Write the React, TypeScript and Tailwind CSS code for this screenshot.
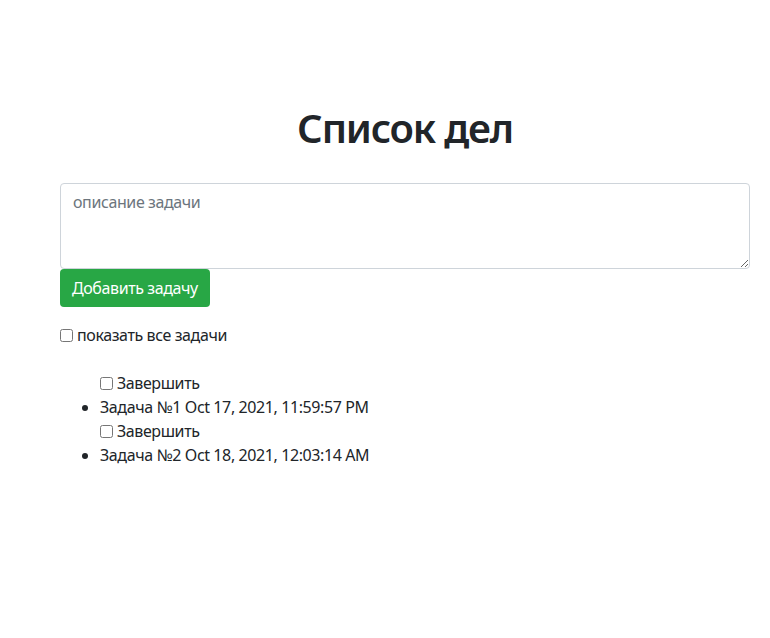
import React from 'react';

const TASKS = [
  { id: 1, title: 'Задача №1', date: 'Oct 17, 2021, 11:59:57 PM' },
  { id: 2, title: 'Задача №2', date: 'Oct 18, 2021, 12:03:14 AM' },
];

const App: React.FC = () => {
  return (
    <div
      className="min-h-screen bg-white text-[#212529] text-base leading-6 tracking-[-0.4px]"
      style={{ fontFamily: '"Noto Sans", "Open Sans", sans-serif' }}
    >
      <div className="ml-[60px] w-[690px] pt-[104px]">
        <h1 className="text-center text-[40px] leading-[48px] font-semibold tracking-[-1.2px] mb-[31px]">Список дел</h1>

        {/* New task form */}
        <textarea
          rows={3}
          placeholder="описание задачи"
          className="block w-full h-[86px] border border-[#ced4da] rounded px-3 py-1.5 text-base leading-6 tracking-[-0.4px] placeholder:text-[#6c757d] outline-none"
        />
        <button className="mt-0 h-[38px] px-3 rounded bg-[#28a745] text-white text-base leading-6">
          Добавить задачу
        </button>

        <label className="mt-4 flex items-center h-6">
          <input type="checkbox" className="m-0 mr-1 w-[13px] h-[13px]" />
          показать все задачи
        </label>

        {/* Task list */}
        <ul className="mt-6 pl-10 list-disc">
          {TASKS.map((task) => (
            <React.Fragment key={task.id}>
              <div className="flex items-center h-6">
                <input type="checkbox" className="m-0 mr-1 w-[13px] h-[13px]" />
                Завершить
              </div>
              <li>
                {task.title} {task.date}
              </li>
            </React.Fragment>
          ))}
        </ul>
      </div>
    </div>
  );
};

export default App;
